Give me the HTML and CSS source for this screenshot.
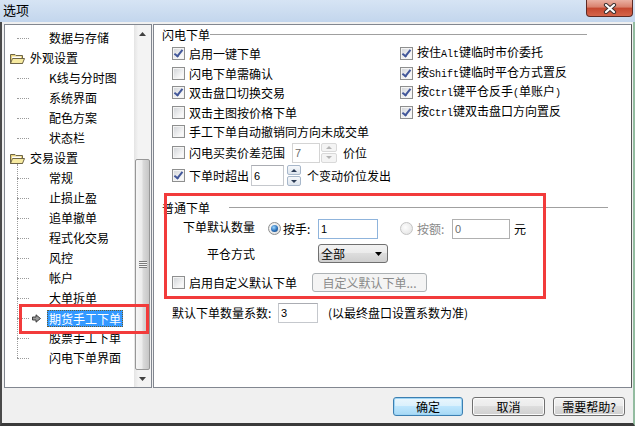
FILE: index.html
```html
<!DOCTYPE html>
<html lang="zh-CN">
<head>
    <meta charset="UTF-8">
    <title>选项</title>
    <link rel="stylesheet" href="styles.css">
</head>
<body>
<div class="window">
    <div class="titlebar">
        <span class="title">选项</span>
        <button class="close-btn">
            <svg width="14" height="11" viewBox="0 0 14 11">
                <path d="M3 2 L11 9 M11 2 L3 9" stroke="#3c3030" stroke-width="4.2" stroke-linecap="round"/>
                <path d="M3 2 L11 9 M11 2 L3 9" stroke="#fff" stroke-width="2.2" stroke-linecap="round"/>
            </svg>
        </button>
    </div>

    <div class="frame">
        <div class="main">
            <!-- left tree -->
            <div class="tree">
                <div class="tree-list">
                    <div class="node leaf">数据与存储</div>
                    <div class="node folder">
                        <svg class="folder-icon" viewBox="0 0 16 13">
                            <path d="M1.5 2.5 H6 L7 3.5 H13.5 V11.5 H1.5 Z" fill="#e8d27a" stroke="#6f6648"/>
                            <rect x="3" y="4.5" width="9" height="4" fill="#fff"/>
                            <path d="M1.5 11.5 L3.5 6.5 H15.5 L13.5 11.5 Z" fill="#f7eaa0" stroke="#6f6648"/>
                        </svg>外观设置
                    </div>
                    <div class="node leaf">K线与分时图</div>
                    <div class="node leaf">系统界面</div>
                    <div class="node leaf">配色方案</div>
                    <div class="node leaf">状态栏</div>
                    <div class="node folder">
                        <svg class="folder-icon" viewBox="0 0 16 13">
                            <path d="M1.5 2.5 H6 L7 3.5 H13.5 V11.5 H1.5 Z" fill="#e8d27a" stroke="#6f6648"/>
                            <rect x="3" y="4.5" width="9" height="4" fill="#fff"/>
                            <path d="M1.5 11.5 L3.5 6.5 H15.5 L13.5 11.5 Z" fill="#f7eaa0" stroke="#6f6648"/>
                        </svg>交易设置
                    </div>
                    <div class="lined">
                        <div class="node leaf">常规</div>
                        <div class="node leaf">止损止盈</div>
                        <div class="node leaf">追单撤单</div>
                        <div class="node leaf">程式化交易</div>
                        <div class="node leaf">风控</div>
                        <div class="node leaf">帐户</div>
                        <div class="node leaf">大单拆单</div>
                        <div class="node leaf selected">
                            <svg class="sel-arrow" viewBox="0 0 9 9">
                                <path d="M0.5 3 H4 V0.8 L8.5 4.5 L4 8.2 V6 H0.5 Z" fill="#9a9a9a" stroke="#303030" stroke-width="0.9"/>
                            </svg>
                            <span class="sel-text">期货手工下单</span>
                        </div>
                        <div class="node leaf">股票手工下单</div>
                        <div class="node leaf">闪电下单界面</div>
                    </div>
                </div>
                <div class="scrollbar">
                    <div class="sb-btn"><svg width="7" height="4" viewBox="0 0 7 4"><path d="M0 4 L3.5 0 L7 4 Z" fill="#404040"/></svg></div>
                    <div class="sb-track">
                        <div class="sb-thumb"><span class="grip"></span></div>
                    </div>
                    <div class="sb-btn"><svg width="7" height="4" viewBox="0 0 7 4"><path d="M0 0 L7 0 L3.5 4 Z" fill="#404040"/></svg></div>
                </div>
                <div class="mark mark-tree"></div>
            </div>

            <!-- right panel -->
            <div class="panel">
                <div class="group">
                    <div class="group-head"><span>闪电下单</span><span class="line line-1"></span></div>
                    <div class="group-body">
                        <div class="col-left">
                            <div class="row"><span class="cb on"></span>启用一键下单</div>
                            <div class="row"><span class="cb"></span>闪电下单需确认</div>
                            <div class="row"><span class="cb on"></span>双击盘口切换交易</div>
                            <div class="row"><span class="cb"></span>双击主图按价格下单</div>
                            <div class="row"><span class="cb"></span>手工下单自动撤销同方向未成交单</div>
                            <div class="row row-spin1">
                                <span class="cb"></span>闪电买卖价差范围
                                <input class="field field-7" type="text" value="7" disabled>
                                <span class="spin off"><span><i class="up"></i></span><span><i class="down"></i></span></span>
                                <span class="unit">价位</span>
                            </div>
                            <div class="row row-spin2">
                                <span class="cb on"></span>下单时超出
                                <input class="field field-6" type="text" value="6">
                                <span class="spin"><span><i class="up"></i></span><span><i class="down"></i></span></span>
                                <span class="unit">个变动价位发出</span>
                            </div>
                        </div>
                        <div class="col-right">
                            <div class="row"><span class="cb on"></span><span class="txt">按住<span class="en">Alt</span>键临时市价委托</span></div>
                            <div class="row"><span class="cb on"></span><span class="txt">按<span class="en">Shift</span>键临时平仓方式置反</span></div>
                            <div class="row"><span class="cb on"></span><span class="txt">按<span class="en">Ctrl</span>键平仓反手<span class="en">(</span>单账户<span class="en">)</span></span></div>
                            <div class="row"><span class="cb on"></span><span class="txt">按<span class="en">Ctrl</span>键双击盘口方向置反</span></div>
                        </div>
                    </div>
                </div>

                <div class="group group-2">
                    <div class="group-head"><span>普通下单</span><span class="line line-2"></span></div>
                    <div class="row row-qty">
                        <span class="lbl lbl-qty">下单默认数量</span>
                        <span class="radio on"></span>
                        <span class="lbl lbl-hand">按手:</span>
                        <input class="field field-focus field-hand" type="text" value="1">
                        <span class="radio off"></span>
                        <span class="lbl lbl-amt">按额:</span>
                        <input class="field field-amt" type="text" value="0" disabled>
                        <span class="unit-yuan">元</span>
                    </div>
                    <div class="row row-close">
                        <span class="lbl lbl-close">平仓方式</span>
                        <div class="combo"><span>全部</span><svg width="7" height="4" viewBox="0 0 7 4"><path d="M0 0 L7 0 L3.5 4 Z" fill="#000"/></svg></div>
                    </div>
                    <div class="row row-custom">
                        <span class="cb"></span><span class="lbl lbl-custom">启用自定义默认下单</span>
                        <button class="btn-disabled">自定义默认下单...</button>
                    </div>
                </div>

                <div class="row row-ratio">
                    <span class="lbl lbl-ratio">默认下单数量系数:</span>
                    <input class="field field-ratio" type="text" value="3">
                    <span class="note">(以最终盘口设置系数为准)</span>
                </div>

                <div class="mark mark-group"></div>
            </div>
        </div>

        <div class="footer">
            <button class="btn btn-default">确定</button>
            <button class="btn btn-cancel">取消</button>
            <button class="btn btn-help">需要帮助?</button>
        </div>
    </div>
</div>
</body>
</html>
```

FILE: styles.css
```css
* {
    box-sizing: border-box;
}

body {
    margin: 0;
    font-family: "Noto Sans CJK SC", "Noto Sans", sans-serif;
    font-size: 12px;
    color: #000;
    background: #fff;
}

.window {
    width: 635px;
    height: 426px;
    overflow: hidden;
    display: flex;
    flex-direction: column;
}

/* title bar */
.titlebar {
    height: 22px;
    flex: none;
    display: flex;
    align-items: flex-start;
    justify-content: space-between;
    background: linear-gradient(#d6e4f4, #c3d6ed);
}

.title {
    font-size: 13px;
    line-height: 20px;
    padding-left: 3px;
}

.close-btn {
    width: 47px;
    height: 17px;
    margin-right: 2px;
    padding: 0;
    border: 1px solid #5e2a24;
    border-top: none;
    border-radius: 0 0 4px 4px;
    background: linear-gradient(#eab0a2, #d9806c 45%, #c4472f 50%, #d5654a);
    display: flex;
    align-items: center;
    justify-content: center;
}

/* window body */
.frame {
    flex: 1;
    display: flex;
    flex-direction: column;
    background: #f0f0f0;
    border-left: 2px solid #4a4a4a;
    border-right: 2px solid #93bca0;
    border-bottom: 3px solid #3a3a3a;
}

.main {
    height: 366px;
    padding: 2px 1px 0 2px;
    display: flex;
    gap: 1px;
}

/* tree */
.tree {
    position: relative;
    width: 148px;
    height: 364px;
    border: 1px solid #828790;
    background: #fff;
    display: flex;
}

.tree-list {
    flex: 1;
    padding-top: 3px;
}

.node {
    position: relative;
    height: 20px;
    line-height: 20px;
    white-space: nowrap;
}

.node.leaf {
    padding-left: 44px;
}

.node.leaf::before {
    content: "";
    position: absolute;
    left: 12px;
    top: 10px;
    width: 12px;
    border-top: 1px dotted #9a9a9a;
}

.node.folder {
    display: flex;
    align-items: center;
    padding-left: 4px;
}

.folder-icon {
    width: 16px;
    height: 13px;
    margin-right: 5px;
}

.lined {
    position: relative;
}

.lined::before {
    content: "";
    position: absolute;
    left: 12px;
    top: -4px;
    height: 194px;
    border-left: 1px dotted #9a9a9a;
}

.node.selected {
    padding-left: 27px;
    display: flex;
    align-items: center;
}

.sel-arrow {
    width: 9px;
    height: 9px;
    margin-right: 6px;
}

.sel-text {
    background: #3399ff;
    color: #fff;
    border: 1px dotted #6b5a2a;
    padding: 0 1px;
    line-height: 15px;
}

/* scrollbar */
.scrollbar {
    width: 17px;
    display: flex;
    flex-direction: column;
    background: linear-gradient(to right, #e4e4e4, #f3f3f3 25%, #f3f3f3);
}

.sb-btn {
    height: 17px;
    display: flex;
    align-items: center;
    justify-content: center;
}

.sb-track {
    flex: 1;
    display: flex;
    flex-direction: column;
    justify-content: flex-end;
}

.sb-thumb {
    height: 211px;
    margin: 0 1px;
    border: 1px solid #979797;
    border-radius: 2px;
    background: linear-gradient(to right, #f6f6f6, #ececec 45%, #d9d9d9 55%, #c6c6c6);
    display: flex;
    align-items: center;
    justify-content: center;
}

.grip {
    width: 8px;
    height: 7px;
    background: repeating-linear-gradient(#7a7a7a 0 1px, #f4f4f4 1px 2px);
}

/* red annotation boxes */
.mark {
    position: absolute;
    border: 3px solid #f23b3b;
    pointer-events: none;
}

.mark-tree {
    left: 14px;
    top: 279px;
    width: 130px;
    height: 30px;
}

.mark-group {
    left: 10px;
    top: 168px;
    width: 382px;
    height: 106px;
}

/* right panel */
.panel {
    position: relative;
    width: 479px;
    height: 364px;
    border: 1px solid #828790;
    border-right-color: #555;
    background: #fff;
    padding-left: 8px;
}

.group-head {
    display: flex;
    align-items: center;
    height: 19px;
}

.line {
    flex: 1;
    height: 1px;
    background: #a0a0a0;
}

.line-1 {
    margin-right: 44px;
}

.group-2 {
    margin-top: 10px;
}

.group-2 .group-head {
    height: 20px;
}

.line-2 {
    margin-left: 19px;
    margin-right: 23px;
}

.group-body {
    display: flex;
    padding-left: 10px;
}

.col-left {
    width: 228px;
}

.row {
    display: flex;
    align-items: center;
    height: 19.5px;
    white-space: nowrap;
}

.row-spin1 {
    height: 22px;
}

.row-spin2 {
    height: 24px;
}

.txt {
    line-height: 16px;
}

.en {
    font-family: "Liberation Mono", monospace;
    font-size: 10px;
    vertical-align: baseline;
}

/* checkbox */
.cb {
    width: 13px;
    height: 13px;
    flex: none;
    margin-right: 4px;
    border: 1px solid #8e8f8f;
    background: linear-gradient(135deg, #cfd2d6, #f8f8f8 75%);
    box-shadow: inset 0 0 0 1px #f4f4f4;
    display: flex;
    align-items: center;
    justify-content: center;
}

.cb.on::after {
    content: "";
    width: 3px;
    height: 7px;
    margin-top: -2px;
    border: solid #42579a;
    border-width: 0 2px 2px 0;
    transform: rotate(38deg);
}

/* radio */
.radio {
    width: 13px;
    height: 13px;
    flex: none;
    border-radius: 50%;
    border: 1px solid #8e8f8f;
    background: radial-gradient(circle at 40% 40%, #fff, #d6d6d6);
    display: flex;
    align-items: center;
    justify-content: center;
}

.radio.on::after {
    content: "";
    width: 7px;
    height: 7px;
    border-radius: 50%;
    background: radial-gradient(circle at 40% 35%, #9ed8ff, #2a6fb8 55%, #0d3a6e);
}

.radio.off {
    border-color: #c4c4c4;
    background: radial-gradient(circle at 40% 40%, #fdfdfd, #e0e0e0);
}

/* text fields */
.field {
    height: 20px;
    margin: 0;
    padding: 0 0 0 2px;
    border: 1px solid #c5c8cd;
    border-top-color: #abadb3;
    background: #fff;
    color: #000;
    font-family: "Liberation Sans", sans-serif;
    font-size: 11px;
    line-height: 18px;
    outline: none;
}

.field:disabled {
    color: #6d6d6d;
    border-color: #d4d4d4;
    background: #fff;
}

.field-7 {
    width: 28px;
    margin-left: 7px;
}

.field-6 {
    width: 33px;
    height: 21px;
    margin-left: 2px;
}

.field-focus {
    border-color: #8fb4dc;
}

.field-hand {
    width: 60px;
}

.field-amt {
    width: 58px;
    border-color: #b0b0b0 !important;
}

.field-ratio {
    width: 40px;
}

.spin {
    width: 16px;
    height: 20px;
    margin-left: 1px;
    display: flex;
    flex-direction: column;
    gap: 1px;
}

.row-spin2 .spin {
    width: 14px;
    height: 21px;
    margin-left: 3px;
}

.spin > span {
    flex: 1;
    border: 1px solid #a7b7ca;
    border-radius: 2px;
    background: linear-gradient(#f6f8fb, #dde5ee);
    display: flex;
    align-items: center;
    justify-content: center;
}

.spin i {
    width: 0;
    height: 0;
    border-left: 3px solid transparent;
    border-right: 3px solid transparent;
}

.spin i.up {
    border-bottom: 3px solid #2b3b55;
}

.spin i.down {
    border-top: 3px solid #2b3b55;
}

.spin.off > span {
    border-color: #d9d9d9;
    background: #f4f4f4;
}

.spin.off i.up {
    border-bottom-color: #b4b4b4;
}

.spin.off i.down {
    border-top-color: #b4b4b4;
}

.unit {
    margin-left: 6px;
}

/* second group */
.row-qty {
    height: 22px;
    padding-left: 21px;
}

.lbl-qty {
    width: 85px;
    align-self: flex-start;
    line-height: 16px;
    margin-top: 1px;
}

.lbl-hand {
    width: 35px;
    margin-left: 2px;
}

.row-qty .radio.off {
    margin-left: 22px;
}

.lbl-amt {
    width: 35px;
    margin-left: 4px;
    color: #8a8a8a;
}

.unit-yuan {
    margin-left: 4px;
}

.row-close {
    height: 28px;
    padding-left: 45px;
}

.lbl-close {
    width: 111px;
}

.combo {
    width: 70px;
    height: 19px;
    border: 1px solid #707070;
    border-radius: 3px;
    background: linear-gradient(#f2f2f2, #ebebeb 49%, #dddddd 50%, #cfcfcf);
    display: flex;
    align-items: center;
    justify-content: space-between;
    padding: 0 5px 0 2px;
}

.row-custom {
    height: 30px;
    padding-left: 10px;
}

.lbl-custom {
    width: 108px;
}

.btn-disabled {
    width: 115px;
    height: 19px;
    margin-left: 15px;
    padding: 0;
    border: 1px solid #adb2b5;
    border-radius: 3px;
    background: #f4f4f4;
    color: #8a8a8a;
    font: 12px "Noto Sans CJK SC", sans-serif;
    line-height: 17px;
}

.row-ratio {
    height: 24px;
    margin-top: 3px;
    padding-left: 10px;
}

.lbl-ratio {
    width: 106px;
}

.note {
    margin-left: 10px;
}

/* footer buttons */
.footer {
    flex: 1;
    display: flex;
    justify-content: flex-end;
    align-items: flex-start;
    padding: 9px 8px 0 0;
    gap: 8px;
}

.btn {
    width: 72px;
    height: 19px;
    padding: 0;
    border: 1px solid #707070;
    border-radius: 3px;
    background: linear-gradient(#f2f2f2, #ebebeb 49%, #dddddd 50%, #cfcfcf);
    box-shadow: inset 0 0 0 1px #fbfbfb;
    font: 12px "Noto Sans CJK SC", sans-serif;
    line-height: 17px;
    color: #000;
}

.btn-default {
    width: 70px;
    margin-right: 1px;
    border-color: #3c7fb1;
    background: linear-gradient(#eaf6fd, #d9f0fc 49%, #bee6fd 50%, #a7d9f5);
    box-shadow: inset 0 0 0 1px #9ed5f5;
}

.btn-cancel {
    width: 73px;
}
```
